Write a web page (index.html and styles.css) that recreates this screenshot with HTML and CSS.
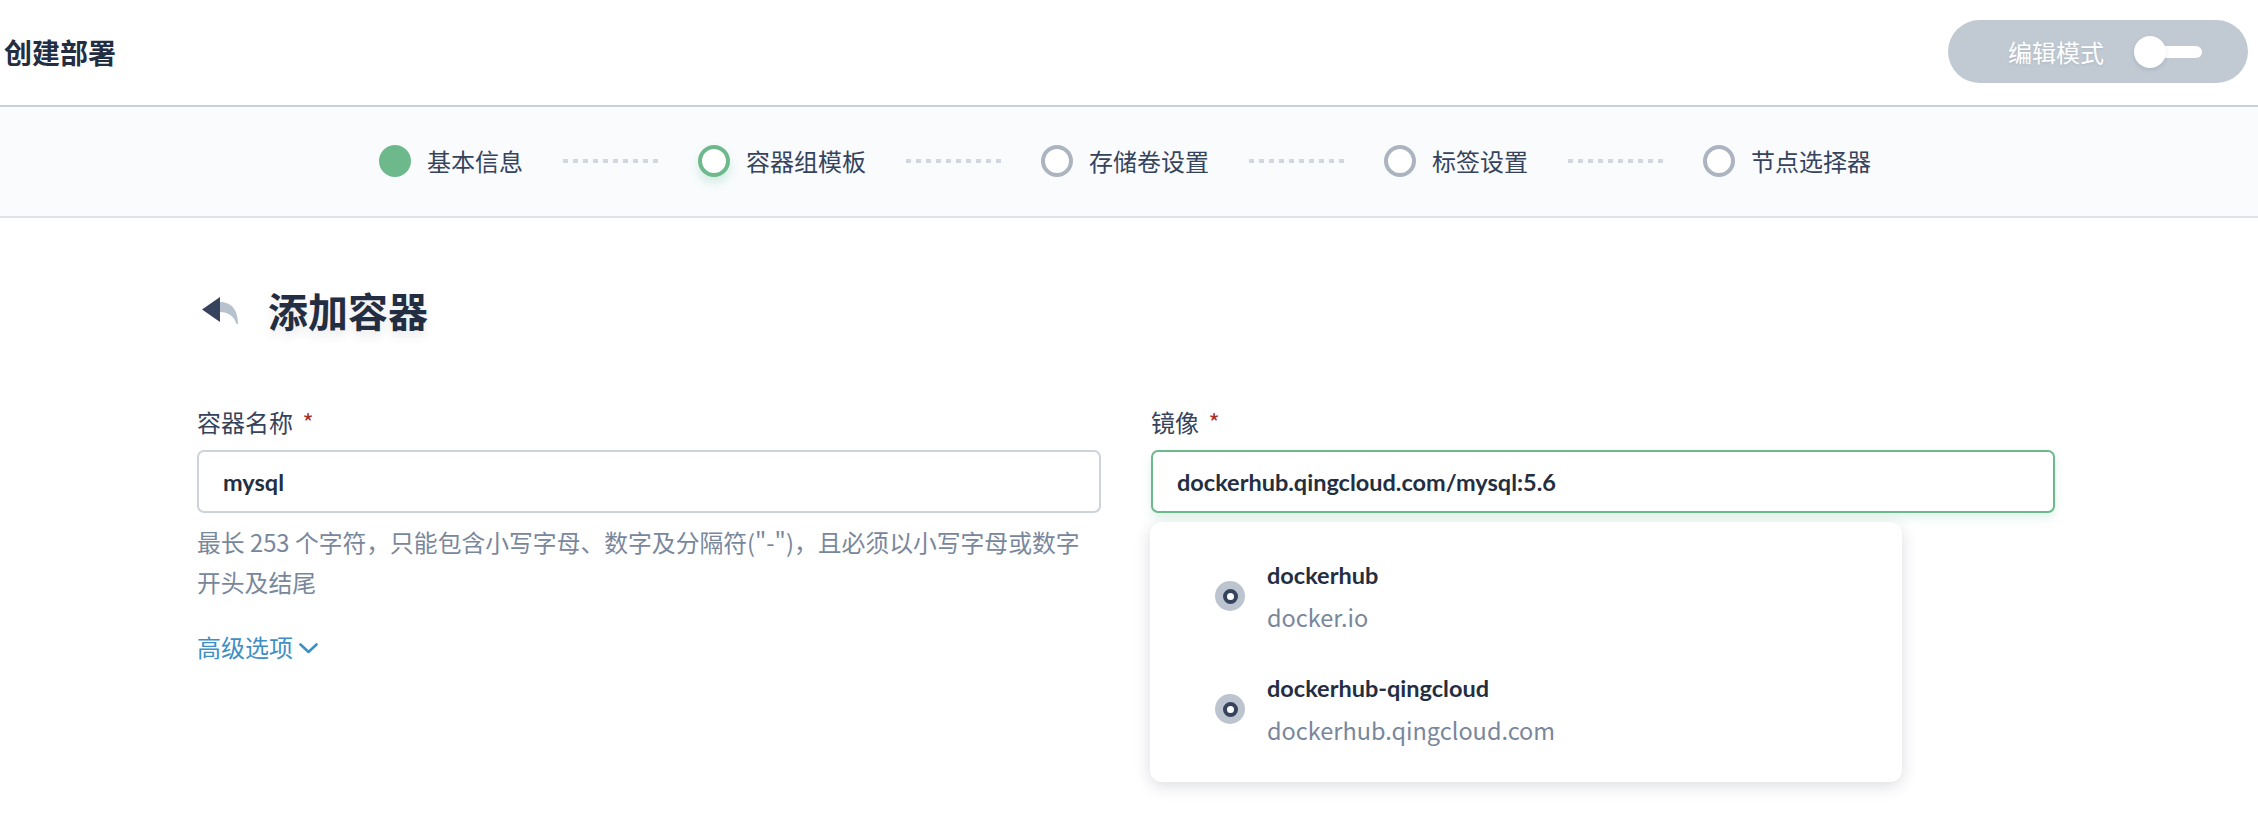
FILE: index.html
```html
<!DOCTYPE html>
<html lang="zh-CN">
<head>
<meta charset="utf-8">
<title>创建部署</title>
<link rel="stylesheet" href="styles.css">
</head>
<body>
<header class="topbar">
  <h1 class="page-title">创建部署</h1>
  <div class="mode-toggle">
    <span class="mode-label">编辑模式</span>
    <span class="switch"><span class="switch-track"></span><span class="switch-knob"></span></span>
  </div>
</header>

<nav class="steps">
  <div class="step done"><span class="step-dot"></span><span class="step-text">基本信息</span></div>
  <span class="step-line"></span>
  <div class="step current"><span class="step-dot"></span><span class="step-text">容器组模板</span></div>
  <span class="step-line"></span>
  <div class="step"><span class="step-dot"></span><span class="step-text">存储卷设置</span></div>
  <span class="step-line"></span>
  <div class="step"><span class="step-dot"></span><span class="step-text">标签设置</span></div>
  <span class="step-line"></span>
  <div class="step"><span class="step-dot"></span><span class="step-text">节点选择器</span></div>
</nav>

<main class="content">
  <div class="section-head">
    <svg class="back-icon" width="36" height="27" viewBox="0 0 36 27">
      <path d="M18 5 C28 5 36 11 36 27 L34.5 27 C32 19 26 15 18 15 Z" fill="#b7c2cd"/>
      <path d="M0 12.5 L18 0 L18 25 Z" fill="#36435c"/>
    </svg>
    <h2 class="section-title">添加容器</h2>
  </div>

  <div class="form-grid">
    <div class="field">
      <label class="field-label">容器名称 <span class="req">*</span></label>
      <div class="input">mysql</div>
      <p class="help">最长 253 个字符，只能包含小写字母、数字及分隔符("-")，且必须以小写字母或数字开头及结尾</p>
      <a class="more-link">高级选项<svg class="chev" width="19" height="11" viewBox="0 0 19 11"><path d="M1.5 1.5 L9.5 9 L17.5 1.5" fill="none" stroke="#3d8fc6" stroke-width="2.6" stroke-linecap="round" stroke-linejoin="round"/></svg></a>
    </div>

    <div class="field">
      <label class="field-label">镜像 <span class="req">*</span></label>
      <div class="input-wrap">
        <div class="input focused">dockerhub.qingcloud.com/mysql:5.6</div>
        <div class="dropdown">
          <div class="option">
            <span class="radio"><span class="radio-in"></span></span>
            <div class="option-text">
              <div class="option-title">dockerhub</div>
              <div class="option-sub">docker.io</div>
            </div>
          </div>
          <div class="option">
            <span class="radio"><span class="radio-in"></span></span>
            <div class="option-text">
              <div class="option-title">dockerhub-qingcloud</div>
              <div class="option-sub">dockerhub.qingcloud.com</div>
            </div>
          </div>
        </div>
      </div>
    </div>
  </div>
</main>
</body>
</html>
```

FILE: styles.css
```css
* { box-sizing: border-box; }
html, body { margin: 0; padding: 0; }
body {
  width: 2258px;
  height: 820px;
  overflow: hidden;
  background: #ffffff;
  color: #242e42;
  font-family: "Noto Sans CJK SC", "Noto Sans", sans-serif;
}

.topbar {
  height: 107px;
  border-bottom: 2px solid #c8d0d9;
  display: flex;
  align-items: center;
  justify-content: space-between;
  padding: 0 10px 2px 4px;
}
.page-title {
  margin: 0;
  font-size: 28px;
  font-weight: 700;
  line-height: 40px;
  color: #242e42;
}
.mode-toggle {
  width: 300px;
  height: 63px;
  border-radius: 32px;
  background: #c1cad3;
  display: flex;
  align-items: center;
  padding-left: 60px;
}
.mode-label {
  color: #ffffff;
  font-size: 24px;
  line-height: 32px;
  text-shadow: 0 1px 3px rgba(36, 46, 66, 0.12);
}
.switch {
  position: relative;
  width: 68px;
  height: 32px;
  margin-left: 30px;
  display: flex;
  align-items: center;
}
.switch-track {
  width: 100%;
  height: 12px;
  margin-left: 8px;
  border-radius: 6px;
  background: #ffffff;
}
.switch-knob {
  position: absolute;
  left: 0;
  top: 0;
  width: 32px;
  height: 32px;
  border-radius: 50%;
  background: #ffffff;
  box-shadow: 0 2px 4px rgba(36, 46, 66, 0.12);
}

.steps {
  height: 111px;
  background: #f9fbfd;
  border-bottom: 2px solid #dde2e8;
  display: flex;
  align-items: center;
  justify-content: center;
  padding: 0 8px 2px 0;
}
.step {
  display: flex;
  align-items: center;
  gap: 16px;
}
.step-dot {
  width: 32px;
  height: 32px;
  border-radius: 50%;
  border: 4px solid #abb4bf;
  background: #ffffff;
}
.step.done .step-dot {
  background: #6db98b;
  border-color: #6db98b;
}
.step.current .step-dot {
  border-color: #6db98b;
  box-shadow: 0 6px 10px rgba(85, 188, 138, 0.22);
}
.step-text {
  font-size: 24px;
  line-height: 32px;
  color: #36435c;
}
.step-line {
  width: 96px;
  height: 4px;
  margin: 0 39px 0 40px;
  background: linear-gradient(to right, #d2d7de 0 5px, transparent 5px 10px);
  background-size: 10px 4px;
}

.content {
  width: 1858px;
  margin: 0 auto;
  padding-top: 67px;
}
.section-head {
  display: flex;
  align-items: center;
  height: 50px;
  padding-left: 2px;
}
.back-icon { display: block; margin-right: 30px; }
.section-title {
  margin: 0;
  font-size: 40px;
  font-weight: 700;
  line-height: 50px;
  color: #242e42;
  text-shadow: 0 6px 10px rgba(36, 46, 66, 0.1);
}

.form-grid {
  display: grid;
  grid-template-columns: 904px 904px;
  column-gap: 50px;
  margin-top: 71px;
  margin-left: -3px;
}
.field-label {
  display: block;
  font-size: 24px;
  line-height: 32px;
  color: #36435c;
}
.req { color: #ab2f29; margin-left: 4px; }
.input-wrap { position: relative; }
.input {
  margin-top: 12px;
  height: 63px;
  border: 2px solid #cdd3db;
  border-radius: 7px;
  padding: 0 24px;
  display: flex;
  align-items: center;
  font-family: "Lato", "Noto Sans CJK SC", sans-serif;
  font-weight: 700;
  font-size: 23.5px;
  color: #242e42;
  background: #ffffff;
}
.input.focused {
  border-color: #6db98b;
  box-shadow: 0 5px 10px rgba(85, 188, 138, 0.18);
}
.help {
  margin: 9px 0 0 0;
  font-size: 23.8px;
  line-height: 40px;
  color: #79879c;
}
.more-link {
  display: inline-flex;
  align-items: center;
  gap: 6px;
  margin-top: 25px;
  font-size: 24px;
  line-height: 40px;
  color: #3d8fc6;
}
.chev { display: block; margin-top: 2px; }

.dropdown {
  position: absolute;
  left: -1px;
  top: 72px;
  width: 752px;
  padding: 32px 0 31px 65px;
  background: #ffffff;
  border-radius: 12px;
  box-shadow: 0 4px 16px rgba(36, 46, 66, 0.16);
  display: flex;
  flex-direction: column;
  gap: 29px;
}
.option {
  display: flex;
  align-items: center;
  gap: 22px;
}
.radio {
  width: 30px;
  height: 30px;
  border-radius: 50%;
  background: #bcc5cf;
  display: flex;
  align-items: center;
  justify-content: center;
}
.radio-in {
  width: 15px;
  height: 15px;
  border-radius: 50%;
  border: 4.5px solid #36435c;
  background: #ffffff;
}
.option-title {
  font-family: "Lato", "Noto Sans CJK SC", sans-serif;
  font-weight: 700;
  font-size: 23.5px;
  line-height: 42px;
  color: #242e42;
}
.option-sub {
  font-size: 23.5px;
  line-height: 42px;
  color: #79879c;
}
```
